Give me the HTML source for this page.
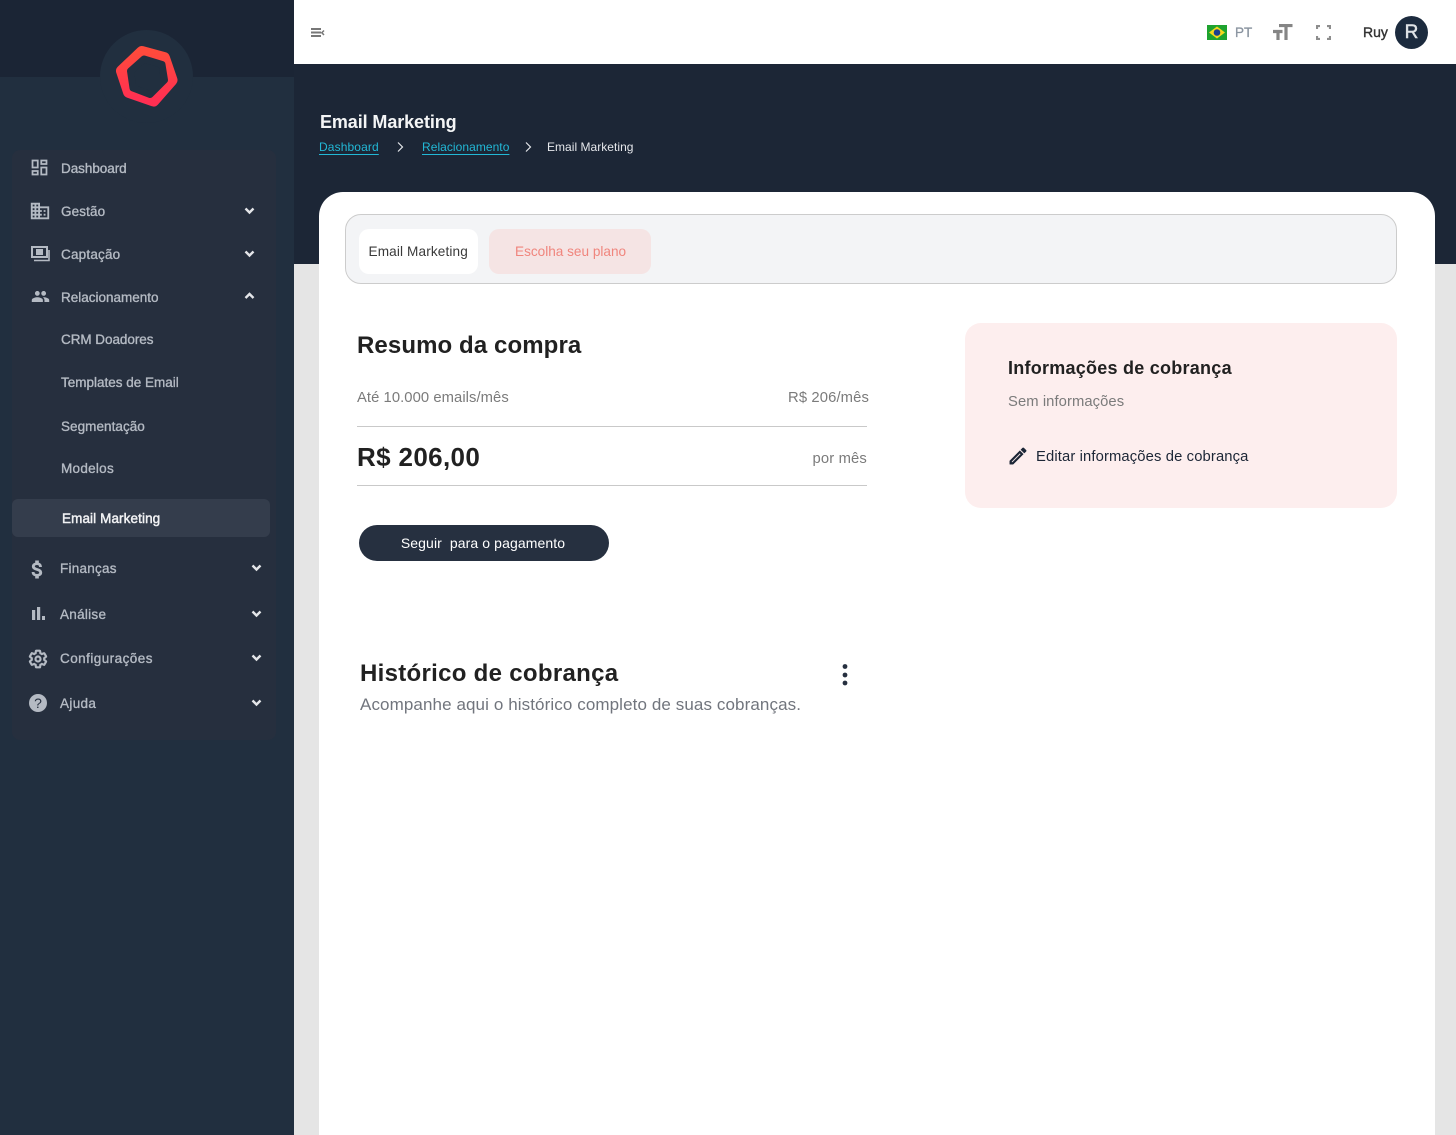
<!DOCTYPE html>
<html lang="pt-BR"><head><meta charset="utf-8"><title>Email Marketing</title>
<style>
html,body{margin:0;padding:0;width:1456px;height:1135px;overflow:hidden;background:#e5e5e5;font-family:"Liberation Sans",sans-serif}
.a{position:absolute}
.t{position:absolute;white-space:nowrap;height:20px;line-height:20px}
.s{font-size:13.500px;letter-spacing:0;color:#b4bac3;left:61px;-webkit-text-stroke:.35px #b4bac3}
svg{position:absolute;display:block}
.i path{fill:#b4bac3}
.chev{fill:none;stroke:#e4e6e9;stroke-width:2.400}
.u{text-decoration:underline;text-underline-offset:2.500px;color:#22b8d6}
</style></head><body>
<div class="a" style="left:0;top:0;width:294px;height:1135px;background:#212f3f"></div>
<div class="a" style="left:0;top:0;width:294px;height:77px;background:#1b2535"></div>
<div class="a" style="left:100px;top:30px;width:93px;height:93px;border-radius:50%;background:#212f3f"></div>
<div class="a" style="left:12px;top:150px;width:264px;height:590px;background:#262f3e;border-radius:8px"></div>
<svg style="left:100px;top:30px" width="93" height="93" viewBox="100 30 93 93"><defs><linearGradient id="g" x1="0" y1="0" x2="0" y2="1"><stop offset="0" stop-color="#ff4a3c"/><stop offset="1" stop-color="#ff2f52"/></linearGradient></defs><polygon points="142,52 164,58 171.500,80 153.500,100.500 129,92 122,71" fill="url(#g)" stroke="url(#g)" stroke-width="12" stroke-linejoin="round"/><polygon points="144,59 162,64.500 164.500,80 150,94.500 133,88 130.500,71" fill="#212f3f" stroke="#212f3f" stroke-width="7" stroke-linejoin="round"/></svg>

<svg class="i" style="left:29.400px;top:157.400px" width="21" height="21" viewBox="0 0 24 24"><path d="M19 5v2h-4V5h4M9 5v6H5V5h4m10 8v6h-4v-6h4M9 17v2H5v-2h4M21 3h-8v6h8V3zM11 3H3v10h8V3zm10 8h-8v10h8V11zm-10 4H3v6h8v-6z"/></svg>
<div class="t s" style="top:159px;letter-spacing:-.05px">Dashboard</div>
<svg class="i" style="left:29px;top:200px" width="22" height="22" viewBox="0 0 24 24"><path d="M12 7V3H2v18h20V7H12zM6 19H4v-2h2v2zm0-4H4v-2h2v2zm0-4H4V9h2v2zm0-4H4V5h2v2zm4 12H8v-2h2v2zm0-4H8v-2h2v2zm0-4H8V9h2v2zm0-4H8V5h2v2zm10 12h-8v-2h2v-2h-2v-2h2v-2h-2V9h8v10zm-2-8h-2v2h2v-2zm0 4h-2v2h2v-2z"/></svg>
<div class="t s" style="top:201.500px;letter-spacing:.13px">Gestão</div>
<svg style="left:31px;top:246px" width="19" height="16" viewBox="0 0 19 16"><path d="M1 1h15v10H1z" fill="none" stroke="#b4bac3" stroke-width="2"/><rect x="5" y="3" width="7" height="6" fill="#b4bac3"/><path d="M18 4v10.500H3" fill="none" stroke="#b4bac3" stroke-width="1.600"/></svg>
<div class="t s" style="top:244.500px;letter-spacing:.2px">Captação</div>
<svg class="i" style="left:30.500px;top:287px" width="19" height="19" viewBox="0 0 24 24"><path d="M16 11c1.660 0 2.990-1.340 2.990-3S17.660 5 16 5c-1.660 0-3 1.340-3 3s1.340 3 3 3zm-8 0c1.660 0 2.990-1.340 2.990-3S9.660 5 8 5C6.340 5 5 6.340 5 8s1.340 3 3 3zm0 2c-2.330 0-7 1.170-7 3.500V19h14v-2.500c0-2.330-4.670-3.500-7-3.500zm8 0c-.29 0-.62.020-.97.050 1.160.84 1.970 1.970 1.970 3.450V19h6v-2.500c0-2.330-4.670-3.500-7-3.500z"/></svg>
<div class="t s" style="top:287.500px">Relacionamento</div>
<div class="t s" style="top:330px;letter-spacing:-.05px">CRM Doadores</div>
<div class="t s" style="top:373px">Templates de Email</div>
<div class="t s" style="top:416.500px;letter-spacing:.05px">Segmentação</div>
<div class="t s" style="top:459px;letter-spacing:.28px">Modelos</div>
<div class="a" style="left:12px;top:499px;width:258px;height:38px;border-radius:6px;background:#343d4c"></div>
<div class="t s" style="top:508.500px;left:62px;letter-spacing:.1px;color:#f2f3f5;-webkit-text-stroke:.45px #f2f3f5">Email Marketing</div>

<svg class="i" style="left:26px;top:557.500px" width="23" height="23" viewBox="0 0 24 24"><path stroke="#b4bac3" stroke-width=".8" d="M11.800 10.900c-2.270-.59-3-1.200-3-2.150 0-1.090 1.010-1.850 2.700-1.850 1.780 0 2.440.85 2.500 2.100h2.210c-.07-1.720-1.120-3.300-3.210-3.810V3h-3v2.160c-1.940.42-3.500 1.680-3.500 3.610 0 2.310 1.910 3.460 4.700 4.130 2.500.6 3 1.480 3 2.410 0 .69-.49 1.790-2.700 1.790-2.060 0-2.870-.92-2.980-2.100h-2.200c.12 2.190 1.760 3.420 3.680 3.830V21h3v-2.150c1.950-.37 3.500-1.500 3.500-3.550 0-2.840-2.430-3.810-4.700-4.400z"/></svg>
<div class="t s" style="top:558.500px;left:60px;letter-spacing:.25px">Finanças</div>
<svg style="left:31.500px;top:607px" width="14" height="13" viewBox="0 0 14 13"><rect x="0" y="3" width="3.200" height="10" fill="#b4bac3"/><rect x="5" y="0" width="3.200" height="13" fill="#b4bac3"/><rect x="10" y="9" width="3" height="4" fill="#b4bac3"/></svg>
<div class="t s" style="top:604.500px;left:60px;letter-spacing:.28px">Análise</div>
<svg style="left:28px;top:648.500px" width="20" height="20" viewBox="0 0 24 24"><path d="M19.430 12.980c.04-.32.070-.64.070-.98s-.03-.66-.07-.98l2.110-1.650c.19-.15.24-.42.120-.64l-2-3.460c-.12-.22-.39-.3-.61-.22l-2.490 1c-.52-.4-1.080-.73-1.690-.98l-.38-2.650C14.460 2.180 14.250 2 14 2h-4c-.25 0-.46.180-.49.420l-.38 2.650c-.61.25-1.170.59-1.690.98l-2.490-1c-.23-.09-.49 0-.61.220l-2 3.460c-.13.22-.07.49.120.64l2.110 1.650c-.04.32-.07.65-.07.98s.03.66.07.98l-2.110 1.650c-.19.15-.24.42-.12.64l2 3.460c.12.22.39.3.61.22l2.490-1c.52.4 1.080.73 1.690.98l.38 2.650c.03.24.24.42.49.42h4c.25 0 .46-.18.49-.42l.38-2.650c.61-.25 1.170-.59 1.690-.98l2.490 1c.23.09.49 0 .61-.22l2-3.460c.12-.22.070-.49-.12-.64l-2.110-1.650z" fill="none" stroke="#b4bac3" stroke-width="2.600"/><circle cx="12" cy="12" r="3" fill="none" stroke="#b4bac3" stroke-width="2.600"/></svg>
<div class="t s" style="top:649px;left:60px;letter-spacing:.45px">Configurações</div>
<div class="a" style="left:29px;top:694px;width:18px;height:18px;border-radius:50%;background:#b4bac3;color:#262f3e;font-size:14px;line-height:18px;text-align:center">?</div>
<div class="t s" style="top:694px;left:60px;letter-spacing:.35px">Ajuda</div>

<svg style="left:244px;top:207px" width="11" height="8"><path class="chev" d="M1.500 1.500 5.500 5.500 9.500 1.500"/></svg>
<svg style="left:244px;top:250px" width="11" height="8"><path class="chev" d="M1.500 1.500 5.500 5.500 9.500 1.500"/></svg>
<svg style="left:244px;top:292px" width="11" height="8"><path class="chev" d="M1.500 6 5.500 2 9.500 6"/></svg>
<svg style="left:251px;top:564px" width="11" height="8"><path class="chev" d="M1.500 1.500 5.500 5.500 9.500 1.500"/></svg>
<svg style="left:251px;top:610px" width="11" height="8"><path class="chev" d="M1.500 1.500 5.500 5.500 9.500 1.500"/></svg>
<svg style="left:251px;top:654px" width="11" height="8"><path class="chev" d="M1.500 1.500 5.500 5.500 9.500 1.500"/></svg>
<svg style="left:251px;top:699px" width="11" height="8"><path class="chev" d="M1.500 1.500 5.500 5.500 9.500 1.500"/></svg>

<div class="a" style="left:294px;top:0;width:1162px;height:64px;background:#fff"></div>
<div class="a" style="left:294px;top:64px;width:1162px;height:200px;background:#1c2636"></div>
<svg style="left:311px;top:28px" width="14" height="10" viewBox="0 0 14 10"><path d="M0 1h10M0 4.500h10M0 8h10" stroke="#777" stroke-width="2" fill="none"/><path d="M13 2.500 10.800 4.700 13 7" stroke="#777" stroke-width="1.500" fill="none"/></svg>
<svg style="left:1207px;top:25px" width="20" height="15" viewBox="0 0 20 15"><rect width="20" height="15" fill="#1ea32f"/><polygon points="10,1.500 18,7.500 10,13.500 2,7.500" fill="#f4d81c"/><circle cx="10" cy="7.500" r="3.300" fill="#1b3f8f"/></svg>
<div class="t" style="left:1235px;top:22.500px;font-size:13.500px;color:#8a94a0;-webkit-text-stroke:.3px #8a94a0">PT</div>
<svg style="left:1273px;top:24px" width="20" height="17" viewBox="0 0 20 17"><path d="M6 1.500h13.500M13 1.500V16M0 7.500h9.500M5 7.500V16" fill="none" stroke="#858585" stroke-width="3.200"/></svg>
<svg style="left:1315.500px;top:25px" width="15" height="15" viewBox="0 0 15 15"><path d="M1 4V1h3M11 1h3v3M14 11v3h-3M4 14H1v-3" fill="none" stroke="#8d8d8d" stroke-width="2.200"/></svg>
<div class="t" style="left:1363px;top:22px;font-size:14px;color:#333;-webkit-text-stroke:.4px #333">Ruy</div>
<div class="a" style="left:1395px;top:16px;width:33px;height:33px;border-radius:50%;background:#1c2b3e;color:#dfe3e6;font-size:19px;line-height:33px;text-align:center;-webkit-text-stroke:.5px #dfe3e6">R</div>

<div class="t" style="left:320px;top:112px;font-size:18px;font-weight:700;letter-spacing:-.1px;color:#f4f5f6">Email Marketing</div>
<div class="t u" style="left:319px;top:137px;font-size:12px;letter-spacing:.12px">Dashboard</div>
<svg style="left:396px;top:141px" width="8" height="12"><path d="M2 1.500 6.500 6 2 10.500" fill="none" stroke="#e5e7eb" stroke-width="1.200"/></svg>
<div class="t u" style="left:422px;top:137px;font-size:12px;letter-spacing:.05px">Relacionamento</div>
<svg style="left:524px;top:141px" width="8" height="12"><path d="M2 1.500 6.500 6 2 10.500" fill="none" stroke="#e5e7eb" stroke-width="1.200"/></svg>
<div class="t" style="left:547px;top:137px;font-size:12px;letter-spacing:.03px;color:#e5e7eb">Email Marketing</div>

<div class="a" style="left:319px;top:192px;width:1116px;height:943px;background:#fff;border-radius:24px 24px 0 0"></div>
<div class="a" style="left:345px;top:214px;width:1050px;height:68px;background:#f3f4f6;border:1px solid #ccc;border-radius:16px"></div>
<div class="a" style="left:359px;top:229px;width:119px;height:45px;background:#fff;border-radius:10px"></div>
<div class="t" style="left:368.500px;top:242px;font-size:13.600px;letter-spacing:.13px;color:#3a3a3a">Email Marketing</div>
<div class="a" style="left:489px;top:229px;width:162px;height:45px;background:#f5e4e4;border-radius:10px"></div>
<div class="t" style="left:515px;top:242px;font-size:13.600px;color:#f0857d">Escolha seu plano</div>

<div class="t" style="left:357px;top:335.500px;font-size:24px;font-weight:700;letter-spacing:.1px;color:#212121">Resumo da compra</div>
<div class="t" style="left:357px;top:388px;font-size:14.800px;letter-spacing:.06px;color:#7b7b7b">Até 10.000 emails/mês</div>
<div class="t" style="right:587px;top:388px;font-size:14.800px;letter-spacing:.12px;color:#7b7b7b">R$ 206/mês</div>
<div class="a" style="left:357px;top:426px;width:510px;height:1px;background:#c9c9c9"></div>
<div class="t" style="left:357px;top:447px;font-size:26px;font-weight:700;letter-spacing:.35px;color:#212121">R$ 206,00</div>
<div class="t" style="right:589px;top:449px;font-size:14.800px;letter-spacing:.15px;color:#7b7b7b">por mês</div>
<div class="a" style="left:357px;top:485px;width:510px;height:1px;background:#c9c9c9"></div>
<div class="a" style="left:359px;top:525px;width:248px;padding-right:2px;height:36px;border-radius:18px;background:#263040;color:#fff;font-size:14px;line-height:36px;text-align:center;letter-spacing:.1px">Seguir&nbsp; para o pagamento</div>

<div class="t" style="left:360px;top:663.500px;font-size:24px;font-weight:700;letter-spacing:.3px;color:#212121">Histórico de cobrança</div>
<div class="t" style="left:360px;top:695px;font-size:17px;letter-spacing:.1px;color:#71757d">Acompanhe aqui o histórico completo de suas cobranças.</div>
<svg style="left:841px;top:663px" width="8" height="24"><circle cx="4" cy="3.500" r="2.400" fill="#263040"/><circle cx="4" cy="12" r="2.400" fill="#263040"/><circle cx="4" cy="20" r="2.400" fill="#263040"/></svg>

<div class="a" style="left:965px;top:323px;width:432px;height:185px;border-radius:16px;background:#fdeeee"></div>
<div class="t" style="left:1008px;top:358px;font-size:18px;font-weight:700;letter-spacing:.25px;color:#212121">Informações de cobrança</div>
<div class="t" style="left:1008px;top:392px;font-size:14.800px;letter-spacing:.07px;color:#7b7b7b">Sem informações</div>
<svg style="left:1007px;top:445px" width="22" height="22" viewBox="0 0 24 24"><path fill="#1c2636" stroke="#1c2636" stroke-width=".5" d="M14.060 9.020l.92.92L5.920 19H5v-.92l9.060-9.060M17.660 3c-.25 0-.51.1-.7.29l-1.830 1.830 3.750 3.750 1.830-1.830c.39-.39.39-1.020 0-1.410l-2.340-2.340c-.2-.2-.45-.29-.71-.29zm-3.600 3.190L3 17.250V21h3.750L17.810 9.940l-3.750-3.750z"/></svg>
<div class="t" style="left:1036px;top:447px;font-size:14.800px;letter-spacing:.12px;color:#1c2636">Editar informações de cobrança</div>
</body></html>
